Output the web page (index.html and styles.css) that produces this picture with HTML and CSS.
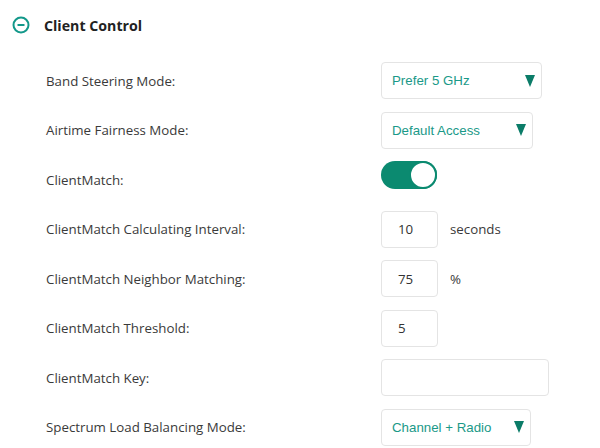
FILE: index.html
```html
<!DOCTYPE html>
<html>
<head>
<meta charset="utf-8">
<link rel="stylesheet" href="styles.css">
</head>
<body>
<div class="panel">
  <div class="header">
    <svg class="collapse-icon" width="18" height="18" viewBox="0 0 18 18">
      <circle cx="9" cy="9" r="7.5" fill="none" stroke="#13988a" stroke-width="2"/>
      <line x1="5.5" y1="9" x2="12.5" y2="9" stroke="#13988a" stroke-width="2"/>
    </svg>
    <span class="title">Client Control</span>
  </div>
  <div class="form">
    <div class="row">
      <div class="label">Band Steering Mode:</div>
      <div class="control"><div class="select w161"><span>Prefer 5 GHz</span><i class="arrow"></i></div></div>
    </div>
    <div class="row">
      <div class="label">Airtime Fairness Mode:</div>
      <div class="control"><div class="select w152"><span>Default Access</span><i class="arrow"></i></div></div>
    </div>
    <div class="row">
      <div class="label">ClientMatch:</div>
      <div class="control top"><div class="toggle"><div class="knob"></div></div></div>
    </div>
    <div class="row">
      <div class="label">ClientMatch Calculating Interval:</div>
      <div class="control"><div class="input w57">10</div><span class="unit">seconds</span></div>
    </div>
    <div class="row">
      <div class="label">ClientMatch Neighbor Matching:</div>
      <div class="control"><div class="input w57">75</div><span class="unit">%</span></div>
    </div>
    <div class="row">
      <div class="label">ClientMatch Threshold:</div>
      <div class="control"><div class="input w57">5</div></div>
    </div>
    <div class="row">
      <div class="label">ClientMatch Key:</div>
      <div class="control"><div class="input w168"></div></div>
    </div>
    <div class="row">
      <div class="label">Spectrum Load Balancing Mode:</div>
      <div class="control"><div class="select w150"><span>Channel + Radio</span><i class="arrow"></i></div></div>
    </div>
  </div>
</div>
</body>
</html>
```
FILE: styles.css
```css
html, body {
  margin: 0;
  padding: 0;
  background: #ffffff;
}
body {
  font-family: "Open Sans", "Liberation Sans", sans-serif;
  color: #333333;
  overflow: hidden;
}
.panel {
  padding: 16px 0 0 12px;
}
.header {
  display: flex;
  align-items: center;
  height: 18px;
  gap: 14px;
}
.collapse-icon {
  display: block;
}
.title {
  font-weight: 700;
  font-size: 14.2px;
  color: #222222;
}
.form {
  margin-top: 28px;
  display: flex;
  flex-direction: column;
  gap: 12.5px;
  padding-left: 34px;
}
.row {
  display: grid;
  grid-template-columns: 335px auto;
  height: 37px;
  align-items: center;
}
.label {
  font-size: 13.3px;
  color: #3a3a3a;
}
.control {
  display: flex;
  align-items: center;
  height: 37px;
}
.control.top {
  align-items: flex-start;
}
.select {
  box-sizing: border-box;
  height: 37px;
  border: 1px solid #e4e4e4;
  border-radius: 4px;
  display: flex;
  align-items: center;
  justify-content: space-between;
  padding: 0 6px 0 10px;
  font-family: "Liberation Sans", Arial, sans-serif;
  font-size: 13.3px;
  color: #1a9988;
}
.arrow {
  width: 0;
  height: 0;
  border-left: 5.5px solid transparent;
  border-right: 5.5px solid transparent;
  border-top: 12px solid #0b7c68;
}
.w161 { width: 161px; }
.w152 { width: 152px; }
.w150 { width: 150px; }
.w57 { width: 57px; }
.w168 { width: 168px; }
.input {
  box-sizing: border-box;
  height: 37px;
  border: 1px solid #e4e4e4;
  border-radius: 4px;
  padding: 0 0 0 16px;
  display: flex;
  align-items: center;
  font-size: 13.3px;
  color: #333333;
}
.unit {
  margin-left: 12px;
  font-size: 13.3px;
  color: #3a3a3a;
}
.toggle {
  box-sizing: border-box;
  width: 56px;
  height: 28px;
  border-radius: 14px;
  background: #0b8a70;
  position: relative;
}
.knob {
  position: absolute;
  right: 0;
  top: 0;
  box-sizing: border-box;
  width: 28px;
  height: 28px;
  border-radius: 50%;
  background: #ffffff;
  border: 2px solid #0b8a70;
}
```
